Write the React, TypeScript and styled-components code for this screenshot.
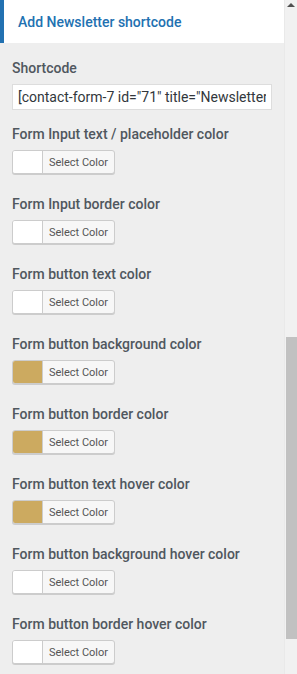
import React from 'react'
import styled, { createGlobalStyle } from 'styled-components'

const GlobalStyle = createGlobalStyle`
  html, body {
    margin: 0;
    padding: 0;
    background: #eeeeee;
  }
  * {
    box-sizing: border-box;
  }
`

const Frame = styled.div`
  display: flex;
  width: 297px;
  height: 674px;
  overflow: hidden;
  font-family: Roboto, "Liberation Sans", sans-serif;
`

const Panel = styled.div`
  width: 284px;
  flex-shrink: 0;
  background: #eeeeee;
`

const SectionHeader = styled.div`
  height: 43px;
  display: flex;
  align-items: center;
  padding-left: 14px;
  background: #ffffff;
  border-left: 4px solid #2271b1;
  color: #2271b1;
  font-size: 14px;
  font-weight: 500;
`

const Body = styled.div`
  padding: 15px 12px 0;
`

const Field = styled.div<{ $gap: number }>`
  margin-bottom: ${p => p.$gap}px;
`

const Label = styled.label`
  display: block;
  margin-bottom: 6px;
  font-size: 14px;
  line-height: 20px;
  font-weight: 500;
  color: #50575e;
`

const TextInput = styled.input`
  display: block;
  width: 260px;
  height: 26px;
  padding: 0 5px;
  border: 1px solid #dddddd;
  background: #ffffff;
  font-family: inherit;
  font-size: 14px;
  color: #32373c;
  outline: none;
`

const ColorButton = styled.button`
  display: flex;
  align-items: stretch;
  height: 24px;
  padding: 0;
  border: 1px solid #cccccc;
  border-radius: 3px;
  background: #f7f7f7;
  box-shadow: 0 1px 0 #cccccc;
  overflow: hidden;
  font-family: inherit;
  cursor: pointer;
`

const Swatch = styled.span<{ $color: string }>`
  width: 30px;
  background: ${p => p.$color};
  border-right: 1px solid #cccccc;
`

const ButtonText = styled.span`
  width: 71px;
  display: flex;
  align-items: center;
  justify-content: center;
  font-size: 11px;
  color: #555555;
`

const ScrollTrack = styled.div`
  width: 13px;
  flex-shrink: 0;
  display: flex;
  flex-direction: column;
  align-items: flex-end;
  background: #f1f1f1;
  border-left: 1px solid #e9e9e9;
`

const UpArrow = styled.span`
  margin: 3px 2px 0 0;
  width: 0;
  height: 0;
  border-left: 4px solid transparent;
  border-right: 4px solid transparent;
  border-bottom: 4px solid #505050;
`

const Thumb = styled.div`
  margin-top: 330px;
  width: 11px;
  height: 302px;
  background: #c1c1c1;
`

const gold = '#ccaa60'

const colorFields = [
  { label: 'Form Input text / placeholder color', color: '#ffffff' },
  { label: 'Form Input border color', color: '#ffffff' },
  { label: 'Form button text color', color: '#ffffff' },
  { label: 'Form button background color', color: gold },
  { label: 'Form button border color', color: gold },
  { label: 'Form button text hover color', color: gold },
  { label: 'Form button background hover color', color: '#ffffff' },
  { label: 'Form button border hover color', color: '#ffffff' },
]

export default function App() {
  return (
    <>
      <GlobalStyle />
      <Frame>
        <Panel>
          <SectionHeader>Add Newsletter shortcode</SectionHeader>
          <Body>
            <Field $gap={14}>
              <Label>Shortcode</Label>
              <TextInput readOnly value={'[contact-form-7 id="71" title="Newsletter"]'} />
            </Field>
            {colorFields.map(f => (
              <Field key={f.label} $gap={20}>
                <Label>{f.label}</Label>
                <ColorButton type="button">
                  <Swatch $color={f.color} />
                  <ButtonText>Select Color</ButtonText>
                </ColorButton>
              </Field>
            ))}
          </Body>
        </Panel>
        <ScrollTrack>
          <UpArrow />
          <Thumb />
        </ScrollTrack>
      </Frame>
    </>
  )
}
